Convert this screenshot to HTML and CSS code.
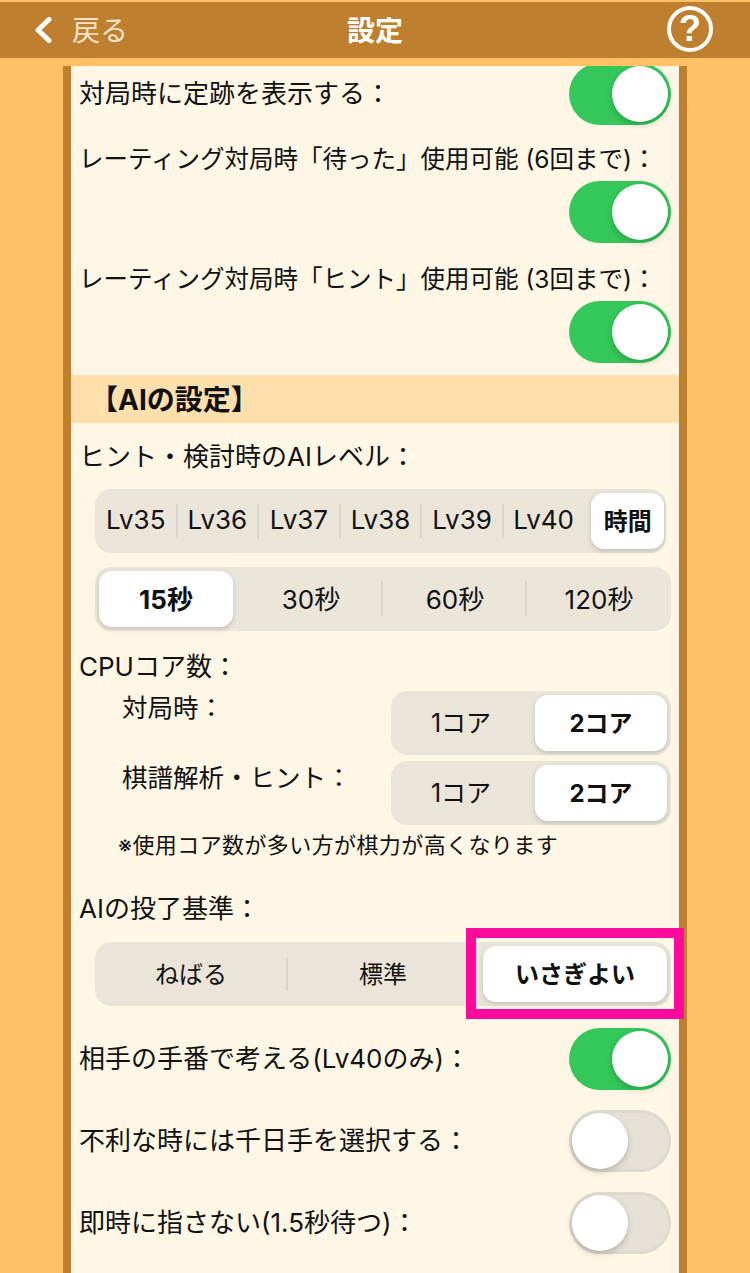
FILE: index.html
```html
<!DOCTYPE html>
<html lang="ja">
<head>
    <meta charset="UTF-8">
    <meta name="viewport" content="width=device-width, initial-scale=1.0">
    <title>設定</title>
    <link rel="stylesheet" href="styles.css">
</head>
<body>

    <header class="top-bar">
        <div class="back">
            <svg class="back-icon" width="18" height="26" viewBox="0 0 18 26">
                <path d="M15 2.5 L4 13 L15 23.5" fill="none" stroke="#fff" stroke-width="5" stroke-linecap="round" stroke-linejoin="round"/>
            </svg>
            <span>戻る</span>
        </div>
        <div class="title">設定</div>
        <div class="help">?</div>
    </header>

    <main class="card">
        <div class="card-inner">
            <div class="row">
                <span class="text">対局時に定跡を表示する：</span>
                <div class="switch on"><i></i></div>
            </div>

            <div class="label long mt13">レーティング対局時「待った」使用可能 (6回まで)：</div>
            <div class="switch-line">
                <div class="switch on"><i></i></div>
            </div>

            <div class="label long mt15">レーティング対局時「ヒント」使用可能 (3回まで)：</div>
            <div class="switch-line">
                <div class="switch on"><i></i></div>
            </div>

            <h2 class="section">【AIの設定】</h2>

            <div class="label mt13">ヒント・検討時のAIレベル：</div>
            <div class="seg seg-level">
                <span>Lv35</span><span>Lv36</span><span>Lv37</span><span>Lv38</span><span>Lv39</span><span>Lv40</span><span class="sel">時間</span>
            </div>
            <div class="seg seg-time">
                <span class="sel">15秒</span><span>30秒</span><span>60秒</span><span>120秒</span>
            </div>

            <div class="label mt15">CPUコア数：</div>
            <div class="core-row first">
                <span class="core-label">対局時：</span>
                <div class="seg seg-core"><span>1コア</span><span class="sel">2コア</span></div>
            </div>
            <div class="core-row">
                <span class="core-label">棋譜解析・ヒント：</span>
                <div class="seg seg-core"><span>1コア</span><span class="sel">2コア</span></div>
            </div>
            <div class="note">※使用コア数が多い方が棋力が高くなります</div>

            <div class="label mt28">AIの投了基準：</div>
            <div class="seg seg-resign">
                <span>ねばる</span><span>標準</span><span class="sel">いさぎよい</span>
                <div class="highlight"></div>
            </div>

            <div class="row mt22">
                <span class="text">相手の手番で考える(Lv40のみ)：</span>
                <div class="switch on"><i></i></div>
            </div>
            <div class="row mt20">
                <span class="text">不利な時には千日手を選択する：</span>
                <div class="switch"><i></i></div>
            </div>
            <div class="row mt20">
                <span class="text">即時に指さない(1.5秒待つ)：</span>
                <div class="switch"><i></i></div>
            </div>
        </div>
    </main>

</body>
</html>
```

FILE: styles.css
```css
* {
    margin: 0;
    padding: 0;
    box-sizing: border-box;
}

html, body {
    height: 100%;
    overflow: hidden;
}

body {
    background-color: #ffc163;
    color: #111;
    font-family: Inter, "Noto Sans CJK JP", sans-serif;
    font-size: 26px;
    padding-top: 2px;
    display: flex;
    flex-direction: column;
}

/* Top bar */
.top-bar {
    flex: none;
    height: 56px;
    background-color: #be7f2e;
    color: #fff;
    display: flex;
    align-items: center;
    justify-content: space-between;
    padding: 0 37px 0 34px;
    position: relative;
}

.back {
    display: flex;
    align-items: center;
    gap: 20px;
    color: #f3e3cd;
    font-size: 28px;
    padding-bottom: 3px;
}

.back-icon {
    margin-top: 3px;
}

.title {
    position: absolute;
    left: 0;
    right: 0;
    text-align: center;
    font-size: 28px;
    font-weight: 700;
    padding-bottom: 3px;
}

.help {
    width: 46px;
    height: 46px;
    margin-bottom: 2px;
    border: 4px solid #fff;
    border-radius: 50%;
    display: flex;
    align-items: center;
    justify-content: center;
    font-family: "Liberation Sans", sans-serif;
    font-size: 36px;
    font-weight: 700;
}

/* Card */
.card {
    flex: 1;
    min-height: 0;
    margin: 8px 63px 0;
    background-color: #fff7e6;
    border-left: 8px solid #be7f2e;
    border-right: 8px solid #be7f2e;
    clip-path: inset(0 -10px 0 -10px);
}

/* first row is scrolled slightly past the top */
.card-inner {
    margin-top: -3px;
}

.row {
    display: flex;
    align-items: center;
    justify-content: space-between;
    height: 62px;
    padding: 0 8px 0 8px;
}

.row .text {
    margin-top: -5px;
}

.label {
    height: 40px;
    line-height: 42px;
    padding-left: 8px;
    white-space: nowrap;
}

.label.long {
    font-size: 24.5px;
}

.mt13 { margin-top: 13px; }
.mt15 { margin-top: 15px; }
.mt20 { margin-top: 20px; }
.mt22 { margin-top: 22px; }
.mt28 { margin-top: 28px; }

.switch-line {
    display: flex;
    justify-content: flex-end;
    padding-right: 8px;
    margin-top: 3px;
}

/* Toggle */
.switch {
    width: 102px;
    height: 62px;
    border-radius: 31px;
    background-color: #e6e1d6;
    box-shadow: inset 0 0 0 3px #dfdacf;
    position: relative;
    flex: none;
}

.switch.on {
    background-color: #34c759;
    box-shadow: none;
}

.switch i {
    position: absolute;
    top: 3px;
    left: 3px;
    width: 56px;
    height: 56px;
    border-radius: 50%;
    background-color: #fff;
    box-shadow: 0 3px 6px rgba(0, 0, 0, 0.2);
}

.switch.on i {
    left: 43px;
}

/* Section heading */
.section {
    height: 48px;
    line-height: 50px;
    margin-top: 12px;
    padding-left: 19px;
    background-color: #ffdfab;
    font-size: 28px;
    font-weight: 700;
}

/* Segmented control */
.seg {
    display: grid;
    height: 64px;
    border-radius: 16px;
    background-color: #ebe5d9;
    position: relative;
}

.seg span {
    display: flex;
    align-items: center;
    justify-content: center;
    position: relative;
    padding-bottom: 4px;
    white-space: nowrap;
}

.seg span + span::before {
    content: "";
    position: absolute;
    left: -1px;
    top: 15px;
    bottom: 15px;
    width: 2px;
    background-color: #dcd6ca;
}

.seg .sel {
    margin: 4px;
    padding-bottom: 3px;
    border-radius: 13px;
    background-color: #fff;
    font-weight: 700;
    box-shadow: 0 2px 5px rgba(0, 0, 0, 0.18);
}

.seg .sel::before,
.seg .sel + span::before {
    display: none;
}

.seg-level {
    width: 571px;
    margin: 13px 0 0 24px;
    grid-template-columns: repeat(7, 1fr);
}

.seg-level .sel {
    margin: 4px 2px 4px 7px;
    font-size: 24px;
}

.seg-time {
    width: 576px;
    margin: 14px 0 0 24px;
    grid-template-columns: repeat(4, 1fr);
}

.seg-time .sel {
    margin-right: 6px;
}

.seg-time span + span::before {
    left: -2px;
}

.seg-core {
    width: 280px;
    grid-template-columns: repeat(2, 1fr);
    font-size: 25px;
}

.seg-core .sel {
    font-size: 24px;
}

.seg-resign {
    width: 576px;
    margin: 14px 0 0 24px;
    grid-template-columns: repeat(3, 1fr);
    font-size: 24px;
}

/* Pink annotation over the selected segment */
.highlight {
    position: absolute;
    left: 371px;
    top: -14px;
    width: 218px;
    height: 91px;
    border: 10px solid #ff0a9c;
}

/* CPU core rows */
.core-row {
    display: flex;
    justify-content: space-between;
    margin-top: 6px;
    padding: 0 8px 0 51px;
}

.core-row.first {
    margin-top: 5px;
}

.core-label {
    line-height: 34px;
    font-size: 25.5px;
}

.note {
    height: 30px;
    line-height: 30px;
    margin-top: 5px;
    padding-left: 47px;
    font-size: 22px;
    letter-spacing: 0.4px;
}
```
